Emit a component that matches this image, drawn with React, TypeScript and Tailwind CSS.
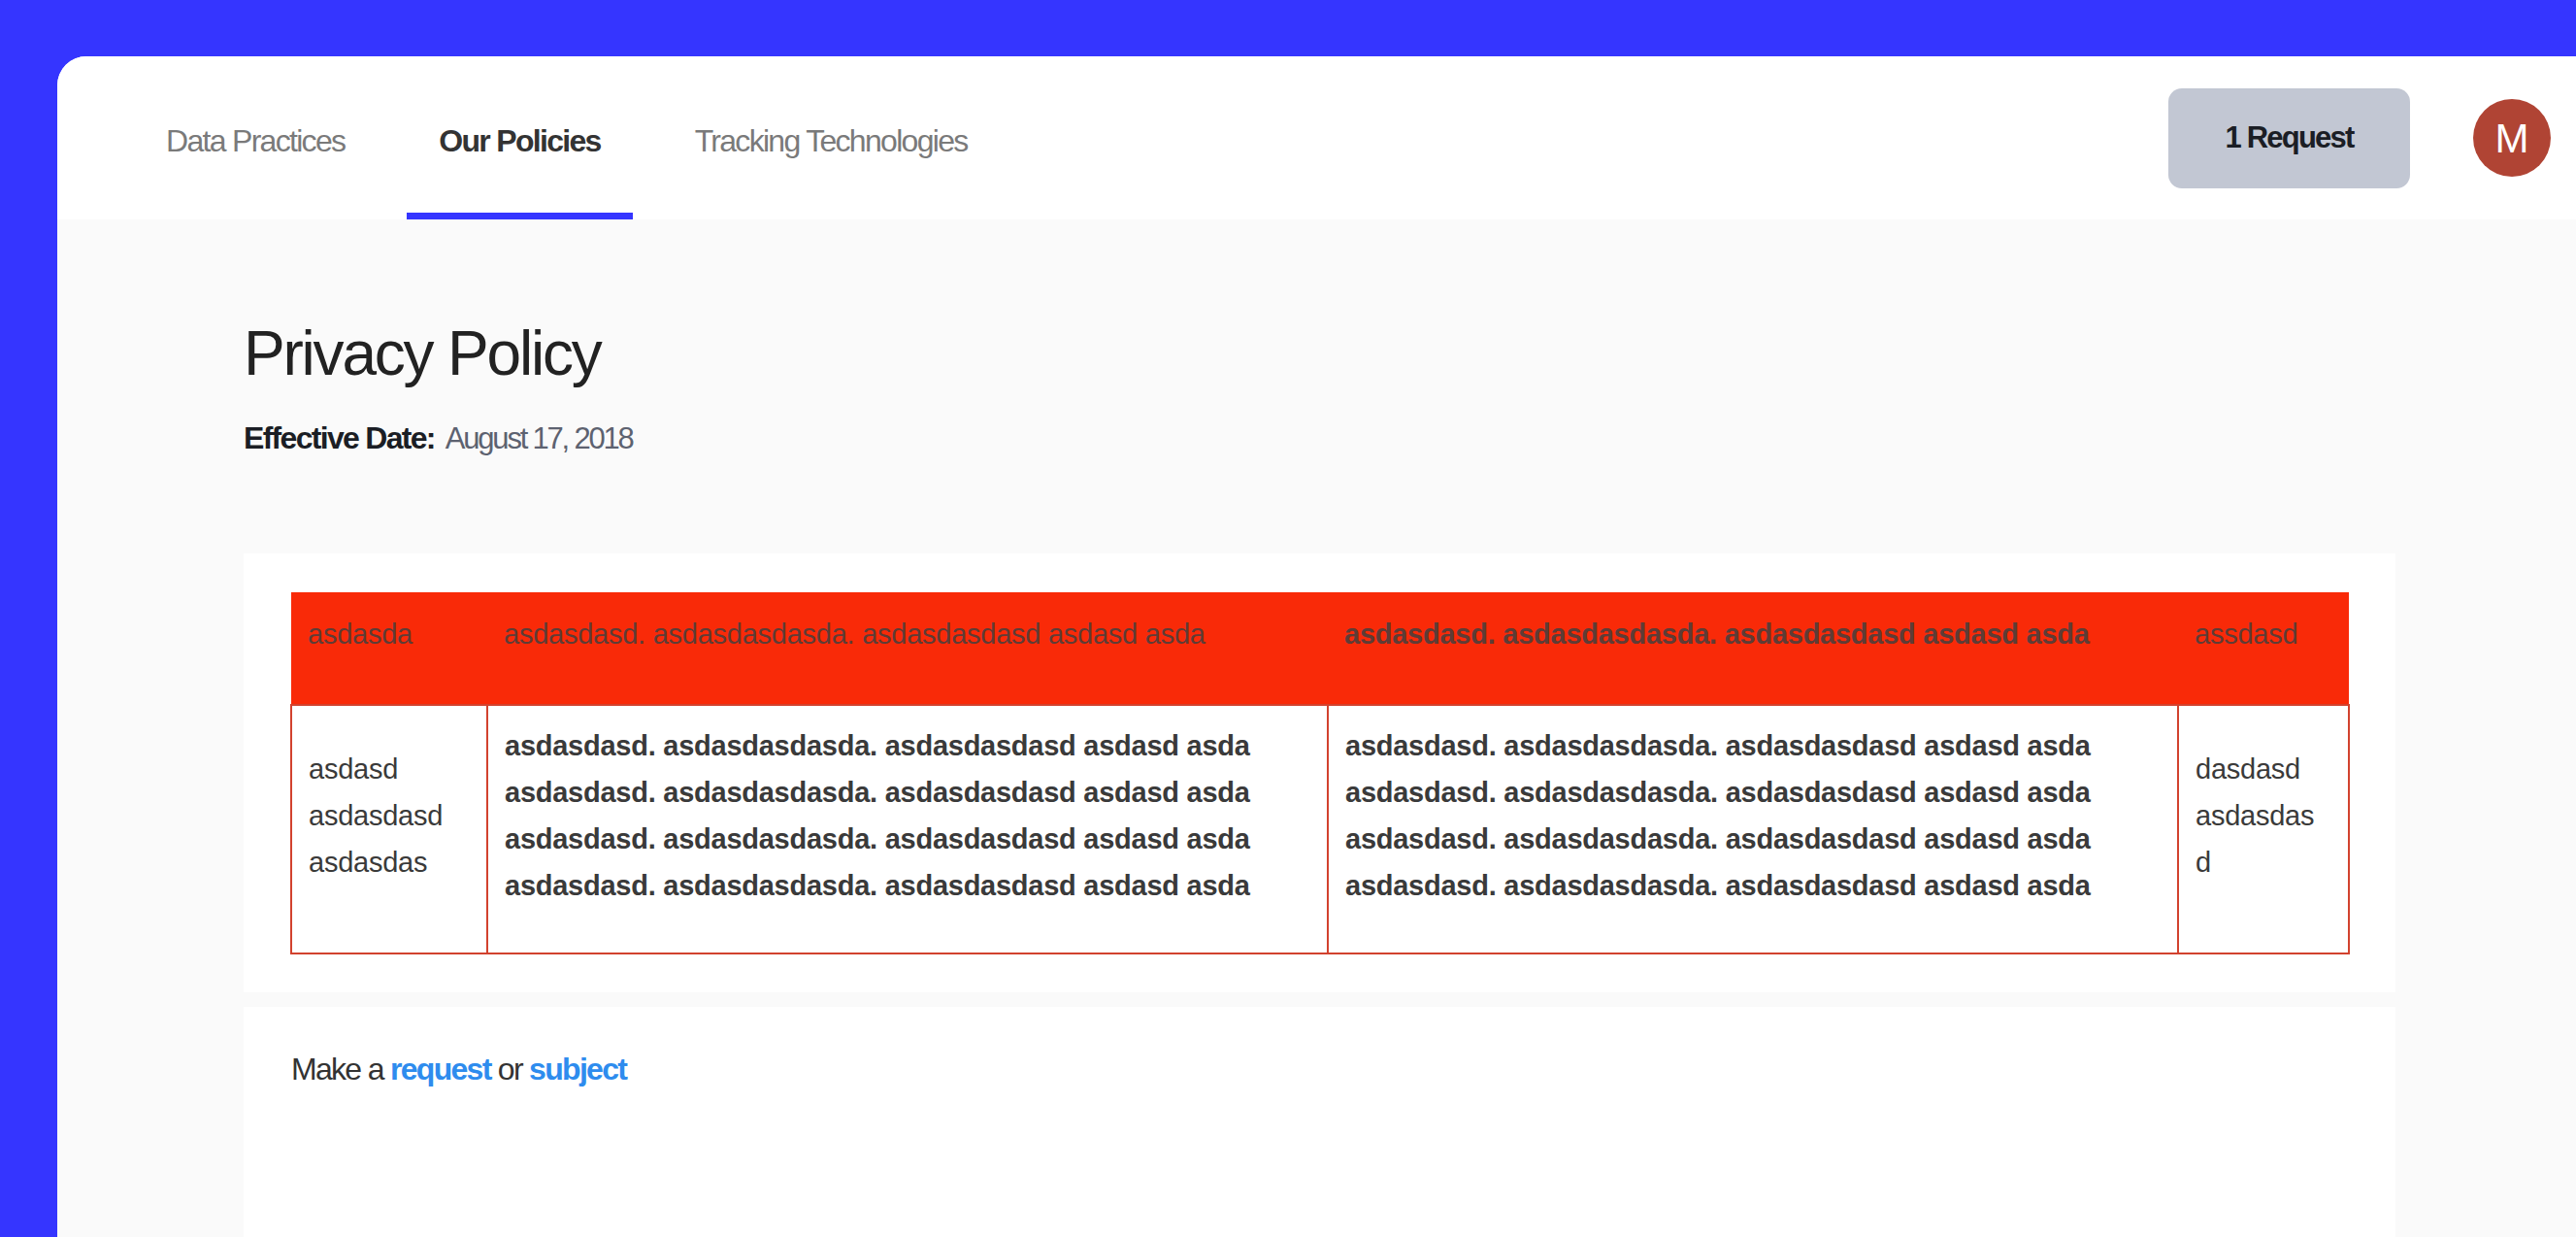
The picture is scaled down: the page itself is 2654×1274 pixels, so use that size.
// Privacy policy page - tabs header, policy table, request footer

const font = { fontFamily: '"Liberation Sans", Arial, sans-serif' };

const longText = 'asdasdasd. asdasdasdasda. asdasdasdasd asdasd asda';

const tabs = [
  { label: 'Data Practices', active: false },
  { label: 'Our Policies', active: true },
  { label: 'Tracking Technologies', active: false },
];

function Header() {
  return (
    <div className="flex h-[168px] items-stretch bg-white pl-[79px] pr-[26px]">
      <nav className="flex items-stretch gap-[31px]">
        {tabs.map((tab) => (
          <a
            key={tab.label}
            className={
              tab.active
                ? 'flex items-center border-b-[7px] border-[#3535FF] px-[33px] pt-[13px] text-[32px] font-bold tracking-[-1.7px] text-[#333333]'
                : 'flex items-center border-b-[7px] border-transparent px-[33px] pt-[13px] text-[32px] tracking-[-1.7px] text-[#7a7a7a]'
            }
          >
            {tab.label}
          </a>
        ))}
      </nav>

      <div className="ml-auto flex items-center gap-[65px]">
        <button className="h-[103px] w-[249px] rounded-[14px] bg-[#C2C7D3] text-[31px] font-bold tracking-[-1.8px] text-[#1b1e25]">
          1 Request
        </button>
        <div className="flex h-[80px] w-[80px] items-center justify-center rounded-full bg-[#B04434] text-[42px] text-white">
          M
        </div>
      </div>
    </div>
  );
}

function PolicyTable() {
  const head = 'pt-[19px] pb-[48px] px-[17px] text-left align-middle text-[#5e3c36]';
  const cell = 'border-2 border-[#D2422E] pt-[17px] pb-[45px] px-[17px] align-middle text-[#3a3a3a]';

  return (
    <table className="w-[2120px] table-fixed border-collapse text-[29px] leading-[48px] tracking-[-0.25px]">
      <colgroup>
        <col className="w-[202px]" />
        <col className="w-[866px]" />
        <col className="w-[876px]" />
        <col className="w-[176px]" />
      </colgroup>
      <thead>
        <tr className="h-[115px] bg-[#F92A08]">
          <th className={`${head} font-normal`}>asdasda</th>
          <th className={`${head} font-normal`}>{longText}</th>
          <th className={`${head} font-bold text-[#4a3b38]`}>{longText}</th>
          <th className={`${head} font-normal`}>assdasd</th>
        </tr>
      </thead>
      <tbody>
        <tr>
          <td className={cell}>asdasd asdasdasd asdasdas</td>
          <td className={`${cell} font-bold`}>
            {longText}
            <br />
            {longText}
            <br />
            {longText}
            <br />
            {longText}
          </td>
          <td className={`${cell} font-bold`}>
            {longText}
            <br />
            {longText}
            <br />
            {longText}
            <br />
            {longText}
          </td>
          <td className={`${cell} pr-[24px] [overflow-wrap:anywhere]`}>dasdasd asdasdasd</td>
        </tr>
      </tbody>
    </table>
  );
}

export default function App() {
  return (
    <div className="min-h-screen overflow-hidden bg-[#3535FF] pl-[59px] pt-[58px]" style={font}>
      <div className="flex min-h-[1216px] flex-col overflow-hidden rounded-tl-[30px] bg-[#FAFAFA]">
        <Header />

        <main className="flex flex-1 flex-col pl-[192px] pr-[186px] pt-[100px]">
          <h1 className="text-[64px] leading-[77px] tracking-[-2.2px] text-[#222222]">Privacy Policy</h1>
          <p className="mt-[24px] text-[32px] leading-[48px] text-[#1b1e25]">
            <span className="font-bold tracking-[-1.7px]">Effective Date:</span>
            <span className="ml-[11px] text-[31px] tracking-[-2.2px] text-[#5d6270]">August 17, 2018</span>
          </p>

          {/* Policy table */}
          <section className="mt-[94px] bg-white px-[48px] pb-[39px] pt-[40px]">
            <PolicyTable />
          </section>

          {/* Request footer */}
          <section className="mt-[15px] flex-1 bg-white px-[49px] pt-[40px]">
            <p className="text-[32px] leading-[48px] tracking-[-1.7px] text-[#333333]">
              Make a <a className="font-bold text-[#2E8CEE]">request</a> or{' '}
              <a className="font-bold text-[#2E8CEE]">subject</a>
            </p>
          </section>
        </main>
      </div>
    </div>
  );
}
